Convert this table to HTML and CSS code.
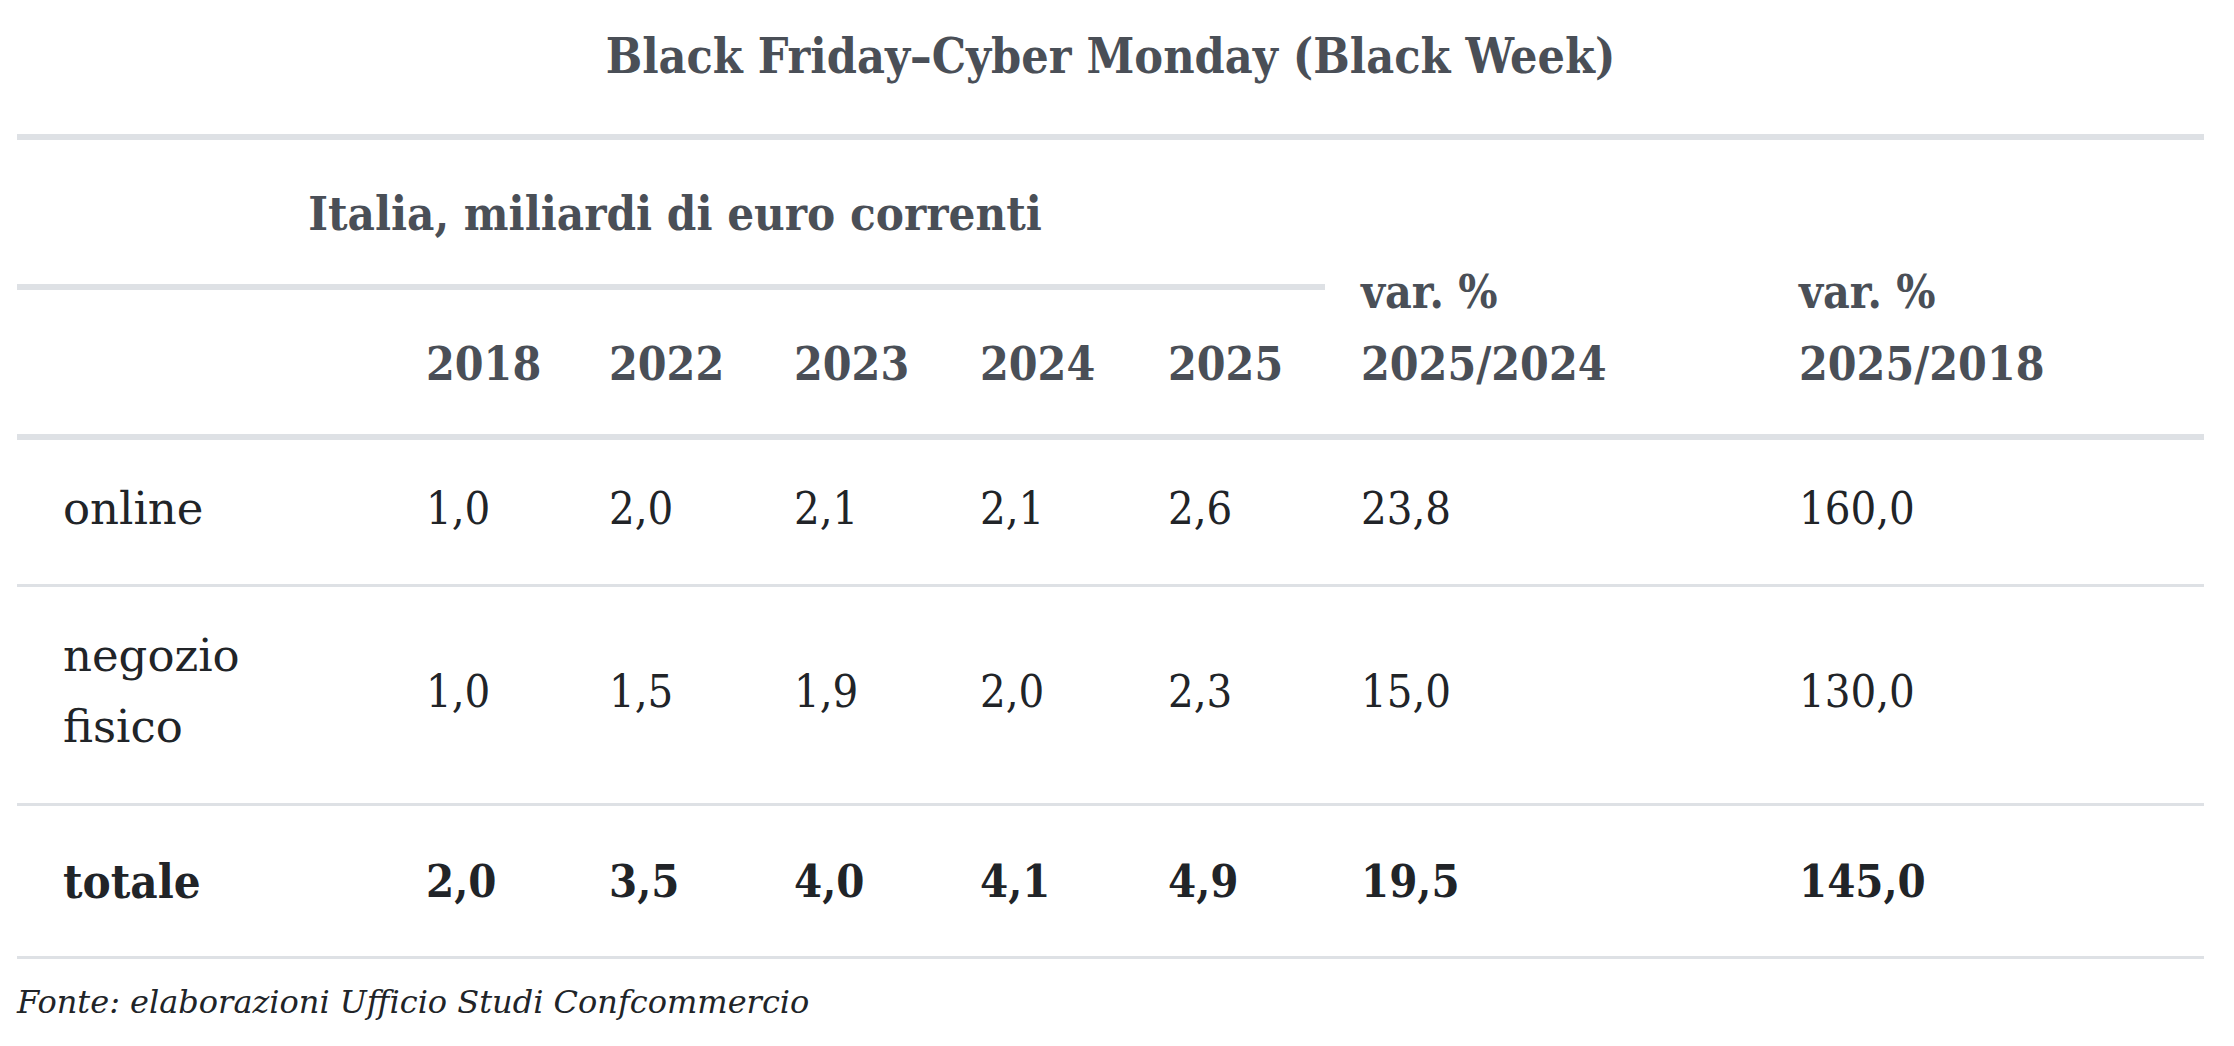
FILE: index.html
```html
<!DOCTYPE html>
<html lang="it">
<head>
<meta charset="utf-8">
<title>Black Friday–Cyber Monday (Black Week)</title>
<link rel="stylesheet" href="styles.css">
</head>
<body>
<div class="wrap">
  <h1 class="title">Black Friday–Cyber Monday (Black Week)</h1>
  <div class="table">
    <div class="hd group">Italia, miliardi di euro correnti</div>
    <div class="hd var v1">var. %<br>2025/2024</div>
    <div class="hd var v2">var. %<br>2025/2018</div>

    <div class="hd year blank"></div>
    <div class="hd year">2018</div>
    <div class="hd year">2022</div>
    <div class="hd year">2023</div>
    <div class="hd year">2024</div>
    <div class="hd year">2025</div>

    <div class="cell label r1">online</div>
    <div class="cell num r1">1,0</div>
    <div class="cell num r1">2,0</div>
    <div class="cell num r1">2,1</div>
    <div class="cell num r1">2,1</div>
    <div class="cell num r1">2,6</div>
    <div class="cell num r1">23,8</div>
    <div class="cell num r1">160,0</div>

    <div class="cell label r2">negozio<br>fisico</div>
    <div class="cell num r2">1,0</div>
    <div class="cell num r2">1,5</div>
    <div class="cell num r2">1,9</div>
    <div class="cell num r2">2,0</div>
    <div class="cell num r2">2,3</div>
    <div class="cell num r2">15,0</div>
    <div class="cell num r2">130,0</div>

    <div class="cell label tot">totale</div>
    <div class="cell num tot">2,0</div>
    <div class="cell num tot">3,5</div>
    <div class="cell num tot">4,0</div>
    <div class="cell num tot">4,1</div>
    <div class="cell num tot">4,9</div>
    <div class="cell num tot">19,5</div>
    <div class="cell num tot">145,0</div>
  </div>
  <p class="source">Fonte: elaborazioni Ufficio Studi Confcommercio</p>
</div>
</body>
</html>
```

FILE: styles.css
```css
html, body {
  margin: 0;
  padding: 0;
  background: #ffffff;
}

.wrap {
  padding: 0 30px 0 17px;
}

.title {
  margin: 26px 0 48px 0;
  font-family: "DejaVu Serif Condensed", "DejaVu Serif", serif;
  font-stretch: condensed;
  font-weight: 700;
  font-size: 48px;
  line-height: 60px;
  color: #4a4f57;
  text-align: center;
}

.table {
  display: grid;
  grid-template-columns: 373px 183px 185px 186px 188px 193px 438px 441px;
  border-top: 6px solid #dee1e5;
}

.hd {
  font-family: "DejaVu Serif Condensed", "DejaVu Serif", serif;
  font-stretch: condensed;
  font-weight: 700;
  font-size: 46px;
  line-height: 72px;
  color: #4a4f57;
}

.group {
  grid-column: 1 / span 6;
  grid-row: 1;
  text-align: center;
  font-size: 47px;
  padding: 38px 0 34px 8px;
  border-bottom: 6px solid #dee1e5;
}

.var {
  grid-row: 1 / span 2;
  display: flex;
  flex-direction: column;
  justify-content: flex-end;
  padding: 0 0 34px 36px;
  border-bottom: 6px solid #dee1e5;
}

.v1 { grid-column: 7; }
.v2 { grid-column: 8; }

.year {
  grid-row: 2;
  padding: 38px 0 34px 36px;
  border-bottom: 6px solid #dee1e5;
}

.year.blank {
  min-height: 72px;
}

.cell {
  display: flex;
  align-items: center;
  padding-left: 36px;
  font-size: 45px;
  line-height: 71px;
  color: #212428;
  border-bottom: 3px solid #dee1e5;
}

.label {
  font-family: "DejaVu Serif", serif;
  padding-left: 46px;
}

.num {
  font-family: "DejaVu Serif Condensed", "DejaVu Serif", serif;
  font-stretch: condensed;
}

.r1, .r2 {
  padding-top: 33px;
  padding-bottom: 40px;
}

.r2 {
  padding-bottom: 41px;
}

.tot {
  font-weight: 700;
  font-size: 46px;
  padding-top: 40px;
  padding-bottom: 39px;
}

.tot.num {
  font-size: 45px;
}

.tot.label {
  font-family: "DejaVu Serif Condensed", "DejaVu Serif", serif;
  font-stretch: condensed;
  font-size: 47px;
}

.source {
  margin: 23px 0 0 0;
  font-family: "DejaVu Serif", serif;
  font-style: italic;
  font-size: 32px;
  line-height: 40px;
  color: #212428;
}
```
